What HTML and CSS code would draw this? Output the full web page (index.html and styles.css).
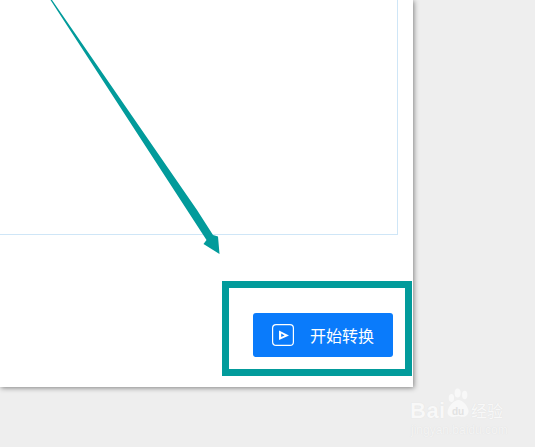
FILE: index.html
```html
<!DOCTYPE html>
<html lang="zh-CN">
<head>
    <meta charset="UTF-8">
    <title>开始转换</title>
    <link rel="stylesheet" href="styles.css">
</head>
<body>
    <div class="window">
        <div class="panel"></div>
        <div class="footer">
            <div class="highlight">
                <button type="button" class="btn-start">
                    <svg class="btn-icon" width="22" height="22" viewBox="0 0 22 22">
                        <rect x="0.6" y="0.6" width="20.8" height="20.8" rx="3.5" fill="none" stroke="#fff" stroke-width="1.2"/>
                        <path d="M7 6.5 L17 11.5 L7 16 Z M9.2 9.6 L9.2 13 L12.6 11.4 Z" fill="#fff" fill-rule="evenodd"/>
                    </svg>
                    <span class="btn-label">开始转换</span>
                </button>
            </div>
        </div>
    </div>

    <!-- annotation arrow over the screenshot -->
    <svg class="arrow" width="535" height="447" viewBox="0 0 535 447">
        <polygon points="50.5,0 52,0 197,210 213,235 218,236.5 219.5,254 203.5,244 206.5,240 187,210" fill="#029b9b"/>
    </svg>

    <div class="watermark">
        <svg class="paw" width="23" height="31" viewBox="0 0 26 31" preserveAspectRatio="none">
            <ellipse cx="5" cy="10" rx="3" ry="4" fill="#f8f8f8"/>
            <ellipse cx="12" cy="5" rx="3.4" ry="4.6" fill="#f8f8f8"/>
            <ellipse cx="20" cy="7" rx="3" ry="4.2" fill="#f8f8f8"/>
            <path d="M13 12 C18 12 26 20 24 25 C22 30 16 29 13 28 C9 29 3 30 1 26 C-1 20 8 12 13 12 Z" fill="#f8f8f8"/>
        </svg>
        <span class="wm-bai">Bai</span>
        <span class="wm-du">du</span>
        <span class="wm-jy">经验</span>
        <span class="wm-url">jingyan.baidu.com</span>
    </div>
</body>
</html>
```

FILE: styles.css
```css
html, body {
    height: 100%;
}
body {
    margin: 0;
    background-color: #eeeeee;
    overflow: hidden;
    font-family: "Noto Sans CJK SC", "Liberation Sans", sans-serif;
}

.window {
    width: 413px;
    height: 387px;
    background-color: #fff;
    box-shadow: 1px 1px 5px rgba(0, 0, 0, 0.45);
}
.panel {
    width: 397px;
    height: 234px;
    border-right: 1px solid #cfe6f7;
    border-bottom: 1px solid #cfe6f7;
}
.footer {
    display: flex;
    justify-content: flex-end;
    padding-top: 46px;
    padding-right: 1px;
}
.highlight {
    display: flex;
    justify-content: flex-end;
    align-items: flex-end;
    width: 190px;
    height: 95px;
    border: 7px solid #029b9b;
    padding: 0 12px 12px 0;
    box-sizing: border-box;
}
.btn-start {
    display: flex;
    align-items: center;
    width: 140px;
    height: 44px;
    padding: 0 0 0 19px;
    border: none;
    border-radius: 3px;
    background-color: #0a7bfb;
    color: #fff;
    font-family: "Noto Sans CJK SC", sans-serif;
    font-size: 16px;
    box-sizing: border-box;
}
.btn-icon {
    margin-right: 16px;
}
.btn-label {
    margin-bottom: 1px;
}

.arrow {
    position: absolute;
    left: 0;
    top: 0;
}

.watermark {
    position: absolute;
    left: 408px;
    top: 388px;
    width: 100px;
    height: 50px;
    color: #f8f8f8;
    text-shadow: 0 0 1px #dcdcdc;
}
.paw {
    position: absolute;
    left: 39px;
    top: 0;
}
.wm-bai {
    position: absolute;
    left: 2px;
    top: 10px;
    font-family: "Liberation Sans", sans-serif;
    font-size: 22px;
    font-weight: bold;
    letter-spacing: 0.5px;
    line-height: 26px;
}
.wm-du {
    position: absolute;
    left: 44px;
    top: 17px;
    font-family: "Liberation Sans", sans-serif;
    font-size: 10px;
    font-weight: bold;
    line-height: 14px;
    color: #e2e2e2;
    text-shadow: none;
}
.wm-jy {
    position: absolute;
    left: 63px;
    top: 11px;
    font-size: 16px;
    line-height: 22px;
}
.wm-url {
    position: absolute;
    left: 3px;
    top: 35px;
    font-family: "Liberation Sans", sans-serif;
    font-size: 12px;
    line-height: 14px;
    color: #f4f4f4;
}
```
